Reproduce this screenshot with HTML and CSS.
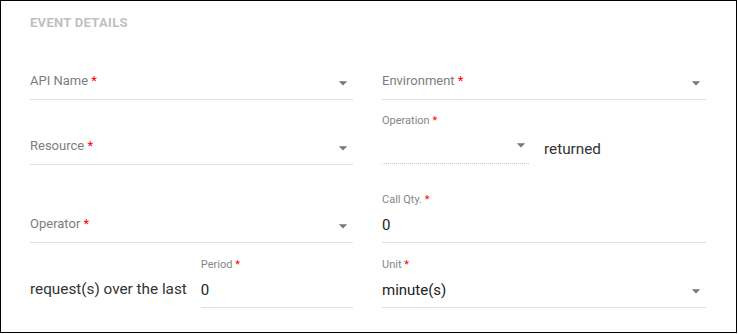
FILE: index.html
```html
<!DOCTYPE html>
<html>
    <head>
        <title>Event details</title>
        <meta charset="UTF-8">
        <meta name="viewport" content="width=device-width">
        <link rel="stylesheet" href="styles.css">
    </head>
    <body>
        <div class="card">
            <h2 class="heading">Event Details</h2>

            <div class="rows">
                <!-- row 1 -->
                <div class="cell">
                    <div class="field">
                        <div class="control">
                            <span class="placeholder">API Name <b>*</b></span>
                            <svg class="arrow" viewBox="0 0 24 24"><path d="M7 10l5 5 5-5z"/></svg>
                        </div>
                    </div>
                </div>
                <div class="cell">
                    <div class="field">
                        <div class="control">
                            <span class="placeholder">Environment <b>*</b></span>
                            <svg class="arrow" viewBox="0 0 24 24"><path d="M7 10l5 5 5-5z"/></svg>
                        </div>
                    </div>
                </div>

                <!-- row 2 -->
                <div class="cell">
                    <div class="field">
                        <div class="control">
                            <span class="placeholder">Resource <b>*</b></span>
                            <svg class="arrow" viewBox="0 0 24 24"><path d="M7 10l5 5 5-5z"/></svg>
                        </div>
                    </div>
                </div>
                <div class="cell">
                    <div class="field disabled operation">
                        <span class="float-label">Operation <b>*</b></span>
                        <div class="control">
                            <span class="value"></span>
                            <svg class="arrow" viewBox="0 0 24 24"><path d="M7 10l5 5 5-5z"/></svg>
                        </div>
                    </div>
                    <span class="inline-text returned">returned</span>
                </div>

                <!-- row 3 -->
                <div class="cell">
                    <div class="field">
                        <div class="control">
                            <span class="placeholder">Operator <b>*</b></span>
                            <svg class="arrow" viewBox="0 0 24 24"><path d="M7 10l5 5 5-5z"/></svg>
                        </div>
                    </div>
                </div>
                <div class="cell">
                    <div class="field">
                        <span class="float-label">Call Qty. <b>*</b></span>
                        <div class="control">
                            <span class="value">0</span>
                        </div>
                    </div>
                </div>

                <!-- row 4 -->
                <div class="cell">
                    <span class="inline-text">request(s) over the last</span>
                    <div class="field period">
                        <span class="float-label">Period <b>*</b></span>
                        <div class="control">
                            <span class="value">0</span>
                        </div>
                    </div>
                </div>
                <div class="cell">
                    <div class="field">
                        <span class="float-label">Unit <b>*</b></span>
                        <div class="control">
                            <span class="value">minute(s)</span>
                            <svg class="arrow" viewBox="0 0 24 24"><path d="M7 10l5 5 5-5z"/></svg>
                        </div>
                    </div>
                </div>
            </div>
        </div>
    </body>
</html>
```

FILE: styles.css
```css
body
{
    margin: 0;
    font-family: Roboto, "Liberation Sans", sans-serif;
}
.card
{
    box-sizing: border-box;
    width: 737px;
    height: 333px;
    border: 1px solid #000;
    padding: 14px 30px 0 29px;
    background: #fff;
}
.heading
{
    margin: 0;
    font-size: 13px;
    line-height: 16px;
    letter-spacing: 0.3px;
    font-weight: bold;
    text-transform: uppercase;
    color: #bfbfbf;
}
.rows
{
    display: grid;
    grid-template-columns: 323px 324px;
    grid-template-rows: 69px 65px 78px 65px;
    column-gap: 29px;
}
.cell
{
    display: flex;
    align-items: flex-end;
    min-width: 0;
}
.field
{
    flex: 1;
    display: flex;
    flex-direction: column;
    border-bottom: 1px solid #e0e0e0;
}
.field.disabled
{
    border-bottom: 1px dotted #c8c8c8;
    margin-bottom: 1px;
}
.operation
{
    flex: none;
    width: 147px;
}
.control
{
    box-sizing: border-box;
    height: 34px;
    padding-bottom: 7px;
    display: flex;
    align-items: flex-end;
}
.placeholder
{
    flex: 1;
    font-size: 13px;
    line-height: 20px;
    margin-bottom: 1px;
    color: #7d7d7d;
}
.placeholder b, .float-label b
{
    font-weight: normal;
    color: #f00;
}
.value
{
    flex: 1;
    font-size: 15px;
    line-height: 20px;
    color: #222;
}
.float-label
{
    font-size: 11px;
    line-height: 14px;
    margin-bottom: 1px;
    color: #868686;
}
.arrow
{
    width: 20px;
    height: 20px;
    margin-bottom: -1px;
    fill: #777;
    flex: none;
}
.operation .arrow
{
    margin-right: -2px;
    margin-bottom: 1px;
}
.inline-text
{
    font-size: 15.3px;
    line-height: 20px;
    color: #333;
    margin-bottom: 9px;
    white-space: nowrap;
}
.returned
{
    margin-left: 15px;
    margin-bottom: 6px;
}
.period
{
    margin-left: 14px;
}
```
